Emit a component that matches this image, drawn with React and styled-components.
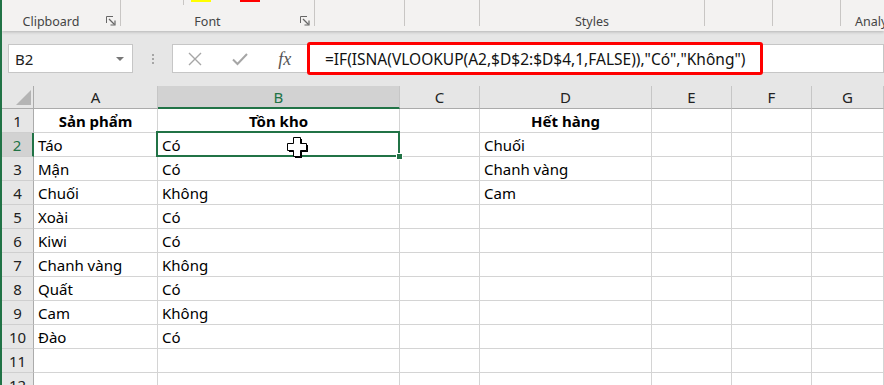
import React from 'react';
import styled, {createGlobalStyle} from 'styled-components';

const GlobalStyle = createGlobalStyle`
    html, body {
        margin: 0;
        padding: 0;
        background: #fff;
    }
    body {
        font-family: "Noto Sans", "Liberation Sans", sans-serif;
    }
`;

const Window = styled.div`
    width: 884px;
    height: 385px;
    overflow: hidden;
    box-sizing: border-box;
    border-left: 2px solid #217346;
    background: #e6e6e6;
    display: flex;
    flex-direction: column;
`;

/* ---------- ribbon ---------- */
const Ribbon = styled.div`
    height: 31px;
    flex-shrink: 0;
    display: flex;
    align-items: flex-start;
    background: #f3f2f1;
    box-shadow: 0 1px 3px rgba(0, 0, 0, 0.22);
    position: relative;
    z-index: 1;
`;

const Group = styled.div`
    width: ${p => p.$w ? p.$w + 'px' : 'auto'};
    flex: ${p => p.$w ? '0 0 auto' : '1'};
    height: 30px;
    display: flex;
    flex-direction: column;
    justify-content: space-between;
`;

const Separator = styled.div`
    width: 1px;
    height: 26px;
    flex-shrink: 0;
    background: #c8c6c4;
`;

const Controls = styled.div`
    height: 5px;
    display: flex;
    align-items: flex-start;
    padding-left: ${p => p.$pad || 0}px;
`;

const MiniDivider = styled.div`
    width: 1px;
    height: 5px;
    background: #c8c6c4;
`;

const Swatch = styled.div`
    width: 20px;
    height: 2px;
    margin-left: ${p => p.$ml}px;
    background: ${p => p.$color};
`;

const LabelRow = styled.div`
    display: flex;
    align-items: center;
    height: 16px;
    padding-left: ${p => p.$pad || 0}px;
`;

const GroupLabel = styled.div`
    flex: 1;
    text-align: ${p => p.$left ? 'left' : 'center'};
    font-size: 12.5px;
    line-height: 16px;
    color: #444;
    white-space: nowrap;
`;

const Launcher = styled.svg`
    width: 10px;
    height: 10px;
    margin: 0 4px 2px 6px;
    flex-shrink: 0;
`;

const DialogLauncher = () => (
    <Launcher viewBox="0 0 10 10">
        <path d="M0.5 7 V0.5 H7" fill="none" stroke="#666" strokeWidth="1"/>
        <path d="M3 3 L8.5 8.5" stroke="#666" strokeWidth="1.2"/>
        <path d="M4.5 9 H9 V4.5" fill="none" stroke="#666" strokeWidth="1.2"/>
    </Launcher>
);

/* ---------- formula bar ---------- */
const FormulaBar = styled.div`
    flex-shrink: 0;
    display: flex;
    align-items: center;
    padding: 13px 0 13px 6px;
`;

const NameBox = styled.div`
    width: 125px;
    height: 29px;
    box-sizing: border-box;
    border: 1px solid #c6c6c6;
    background: #fff;
    display: flex;
    align-items: center;
    justify-content: space-between;
    padding: 0 8px 0 6px;
    font-size: 15px;
    color: #222;
`;

const Caret = styled.div`
    width: 0;
    height: 0;
    border-left: 4px solid transparent;
    border-right: 4px solid transparent;
    border-top: 4px solid #777;
`;

const Grip = styled.div`
    width: 39px;
    display: flex;
    flex-direction: column;
    align-items: center;
    gap: 2px;
`;

const GripDot = styled.div`
    width: 2px;
    height: 2px;
    background: #a6a6a6;
`;

const FxBox = styled.div`
    width: 135px;
    height: 29px;
    box-sizing: border-box;
    border: 1px solid #c6c6c6;
    border-right: none;
    background: #fff;
    display: flex;
    align-items: center;
`;

const FxButton = styled.div`
    width: 45px;
    display: flex;
    justify-content: center;
    align-items: center;
    color: ${p => p.$dim ? '#a6a6a6' : '#555'};
`;

const FxLabel = styled.span`
    font-family: "Liberation Serif", "DejaVu Serif", serif;
    font-style: italic;
    font-size: 18px;
    line-height: 1;
`;

const FormulaInput = styled.div`
    flex: 1;
    height: 29px;
    box-sizing: border-box;
    border: 1px solid #c6c6c6;
    background: #fff;
    display: flex;
    align-items: center;
`;

const Highlight = styled.div`
    width: 456px;
    height: 33px;
    flex-shrink: 0;
    margin-left: -1px;
    box-sizing: border-box;
    border: 3px solid #ff0000;
    border-radius: 3px;
    padding-left: 15px;
    display: flex;
    align-items: center;
    font-size: 15.5px;
    color: #111;
    white-space: nowrap;
`;

/* ---------- sheet ---------- */
const Sheet = styled.div`
    flex: 1;
    display: grid;
    grid-template-columns: 32px 124px 242px 80px 172px 80px 80px 1fr;
    grid-template-rows: 23px;
    grid-auto-rows: 24px;
    background: #fff;
    font-size: 15px;
`;

const Corner = styled.div`
    background: #e6e6e6;
    box-sizing: border-box;
    border-right: 1px solid #ababab;
    border-bottom: 1px solid #ababab;
    display: flex;
    align-items: flex-end;
    justify-content: flex-end;
    padding: 0 2px 3px 0;
`;

const CornerTriangle = styled.div`
    width: 0;
    height: 0;
    border-left: 15px solid transparent;
    border-bottom: 15px solid #b4b4b4;
`;

const ColHeader = styled.div`
    background: ${p => p.$selected ? '#d2d2d2' : '#e6e6e6'};
    color: ${p => p.$selected ? '#217346' : '#222'};
    box-sizing: border-box;
    border-right: 1px solid #c6c6c6;
    border-bottom: ${p => p.$selected ? '2px solid #217346' : '1px solid #ababab'};
    display: flex;
    align-items: center;
    justify-content: center;
    padding-top: ${p => p.$selected ? 1 : 0}px;
`;

const RowHeader = styled.div`
    background: ${p => p.$selected ? '#d2d2d2' : '#e6e6e6'};
    color: ${p => p.$selected ? '#217346' : '#222'};
    box-sizing: border-box;
    border-right: ${p => p.$selected ? '2px solid #217346' : '1px solid #ababab'};
    border-bottom: 1px solid #cfcfcf;
    display: flex;
    align-items: center;
    justify-content: center;
    padding-top: 1px;
`;

const Cell = styled.div`
    box-sizing: border-box;
    border-right: 1px solid #d4d4d4;
    border-bottom: 1px solid #d4d4d4;
    padding: 1px 4px 0 4px;
    display: flex;
    align-items: center;
    justify-content: ${p => p.$bold ? 'center' : 'flex-start'};
    font-weight: ${p => p.$bold ? 700 : 400};
    color: #000;
    white-space: nowrap;
    position: ${p => p.$selected ? 'relative' : 'static'};
    z-index: ${p => p.$selected ? 2 : 'auto'};

    ${p => p.$selected && `
        &::before {
            content: '';
            position: absolute;
            left: -2px;
            top: -2px;
            right: -1px;
            bottom: -1px;
            border: 2px solid #217346;
            pointer-events: none;
        }
        &::after {
            content: '';
            position: absolute;
            right: -4px;
            bottom: -4px;
            width: 5px;
            height: 5px;
            background: #217346;
            border: 1px solid #fff;
        }
    `}
`;

const Cursor = styled.svg`
    position: absolute;
    left: 129px;
    top: 4px;
    width: 22px;
    height: 22px;
    z-index: 3;
`;

const CellCursor = () => (
    <Cursor viewBox="0 0 22 22">
        <polygon points="8,2 15,2 15,8 21,8 21,15 15,15 15,21 8,21 8,15 2,15 2,8 8,8" fill="#000"/>
        <polygon points="6.5,0.5 13.5,0.5 13.5,6.5 19.5,6.5 19.5,13.5 13.5,13.5 13.5,19.5 6.5,19.5 6.5,13.5 0.5,13.5 0.5,6.5 6.5,6.5"
                 fill="#fff" stroke="#000" strokeWidth="1"/>
    </Cursor>
);

const columns = ['A', 'B', 'C', 'D', 'E', 'F', 'G'];

const rows = [
    ['Sản phẩm', 'Tồn kho', '', 'Hết hàng'],
    ['Táo', 'Có', '', 'Chuối'],
    ['Mận', 'Có', '', 'Chanh vàng'],
    ['Chuối', 'Không', '', 'Cam'],
    ['Xoài', 'Có'],
    ['Kiwi', 'Có'],
    ['Chanh vàng', 'Không'],
    ['Quất', 'Có'],
    ['Cam', 'Không'],
    ['Đào', 'Có'],
    [],
    [],
];

const formula = '=IF(ISNA(VLOOKUP(A2,$D$2:$D$4,1,FALSE)),"Có","Không")';

const App = () => {
    return (
        <>
            <GlobalStyle/>
            <Window>
                <Ribbon>
                    <Group $w={118}>
                        <Controls/>
                        <LabelRow>
                            <GroupLabel>Clipboard</GroupLabel>
                            <DialogLauncher/>
                        </LabelRow>
                    </Group>
                    <Separator/>
                    <Group $w={193}>
                        <Controls $pad={62}>
                            <MiniDivider/>
                            <Swatch $ml={7} $color="#ffff00"/>
                            <Swatch $ml={29} $color="#ff0000"/>
                        </Controls>
                        <LabelRow>
                            <GroupLabel>Font</GroupLabel>
                            <DialogLauncher/>
                        </LabelRow>
                    </Group>
                    <Separator/>
                    <Group $w={89}/>
                    <Separator/>
                    <Group $w={74}/>
                    <Separator/>
                    <Group $w={224}>
                        <Controls/>
                        <LabelRow>
                            <GroupLabel>Styles</GroupLabel>
                        </LabelRow>
                    </Group>
                    <Separator/>
                    <Group $w={67}/>
                    <Separator/>
                    <Group $w={67}/>
                    <Separator/>
                    <Group>
                        <Controls/>
                        <LabelRow $pad={14}>
                            <GroupLabel $left>Analysis</GroupLabel>
                        </LabelRow>
                    </Group>
                </Ribbon>

                <FormulaBar>
                    <NameBox>
                        <span>B2</span>
                        <Caret/>
                    </NameBox>
                    <Grip>
                        <GripDot/><GripDot/><GripDot/>
                    </Grip>
                    <FxBox>
                        <FxButton $dim>
                            <svg width="14" height="14" viewBox="0 0 14 14">
                                <path d="M1 1 L13 13 M13 1 L1 13" stroke="currentColor" strokeWidth="1.4"/>
                            </svg>
                        </FxButton>
                        <FxButton $dim>
                            <svg width="16" height="14" viewBox="0 0 16 14">
                                <path d="M1 7.5 L5.5 12 L15 2" fill="none" stroke="currentColor" strokeWidth="2"/>
                            </svg>
                        </FxButton>
                        <FxButton>
                            <FxLabel>fx</FxLabel>
                        </FxButton>
                    </FxBox>
                    <FormulaInput>
                        <Highlight>{formula}</Highlight>
                    </FormulaInput>
                </FormulaBar>

                <Sheet>
                    <Corner><CornerTriangle/></Corner>
                    {columns.map(c => (
                        <ColHeader key={c} $selected={c === 'B'}>{c}</ColHeader>
                    ))}
                    {rows.map((row, r) => (
                        <React.Fragment key={r}>
                            <RowHeader $selected={r === 1}>{r + 1}</RowHeader>
                            {columns.map((c, ci) => {
                                const selected = r === 1 && c === 'B';
                                return (
                                    <Cell key={c} $bold={r === 0} $selected={selected}>
                                        {row[ci] || ''}
                                        {selected && <CellCursor/>}
                                    </Cell>
                                );
                            })}
                        </React.Fragment>
                    ))}
                </Sheet>
            </Window>
        </>
    );
};

export default App;
